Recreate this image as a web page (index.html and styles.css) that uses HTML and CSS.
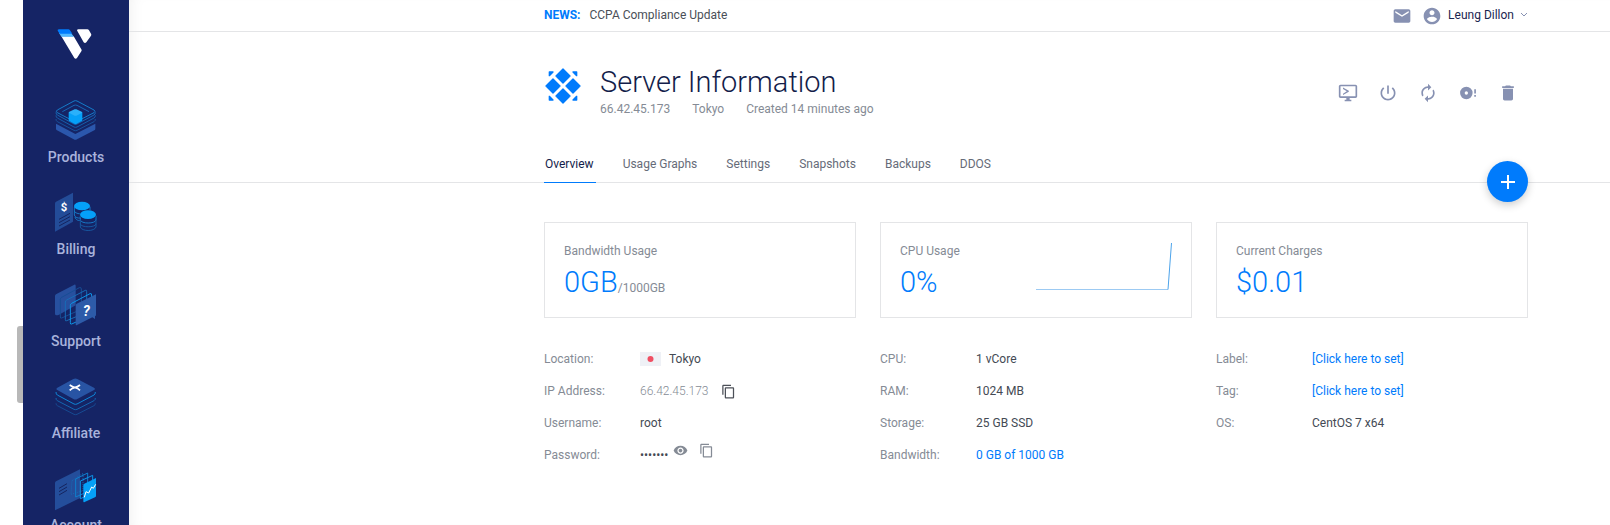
FILE: index.html
```html
<!DOCTYPE html>
<html lang="en">
<head>
<meta charset="utf-8">
<title>Server Information</title>
<meta name="viewport" content="width=device-width, initial-scale=1">
<link rel="stylesheet" href="styles.css">
</head>
<body>
<div class="gutter"><div class="gutter-thumb"></div></div>
<aside class="sidebar">
  <a class="logo" href="#" aria-label="Home">
    <svg width="36" height="30" viewBox="0 0 108 90">
      <path fill="#fff" d="M13 22H50L73 61Q75 64 73 67L60 87Q56 91 52 87Z"/>
      <path fill="#51b9ff" d="M6 12H42L51 23H13Z"/>
      <path fill="#007bfc" d="M3 7Q0 1 6 1H34Q37 1 39 4L46 14H8Z"/>
      <path fill="#fff" d="M61 6Q58 1 64 1H91Q94 1 96 4L102 14Q104 17 102 20L88 40Q84 44 80 40Z"/>
    </svg>
  </a>
  <nav class="side-nav">
    <a class="side-item" href="#">
      <svg class="side-icon" viewBox="0 0 126 126">
        <path fill="#2b57ac" d="M3 74L61 105L121 74V89Q121 92 118 94L66 121Q61 124 56 121L6 94Q3 92 3 89Z"/>
        <g fill="none" stroke-width="3">
          <path stroke="#17509a" d="M3 60Q3 66 7 68L57 94Q61 96 66 94L117 68Q121 66 121 60"/>
          <path stroke="#165da9" d="M3 49Q3 55 7 57L57 84Q61 86 66 84L117 57Q121 55 121 49"/>
          <path stroke="#1765b4" d="M3 40Q3 46 7 48L57 75Q61 77 66 75L117 48Q121 46 121 40M22 38L57 19Q61 17 66 19L102 38"/>
          <path stroke="#147bc9" d="M7 33L57 6Q61 4 66 6L117 33Q123 37 117 41L66 67Q61 69 57 67L7 41Q1 37 7 33Z"/>
        </g>
        <path fill="#05a0f8" d="M41 40L61 48L82 40V64Q82 66 79 67L64 75Q61 76 59 75L44 67Q41 66 41 64Z"/>
        <path fill="#2bb1fa" d="M43 38L59 31Q61 30 64 31L80 38Q83 40 80 42L64 50Q61 51 59 50L43 42Q40 40 43 38Z"/>
      </svg>
      <span>Products</span>
    </a>
    <a class="side-item" href="#">
      <svg class="side-icon" viewBox="0 -4 126 126">
        <path fill="#234c98" d="M0 33Q0 30 3 28L54 1V88L0 118Z"/>
        <g stroke="#15245f" stroke-width="3"><path d="M12 81L45 63M12 91L45 73M12 101L45 83"/></g>
        <text class="icon-text" x="17" y="56">$</text>
        <g fill="none" stroke="#1577c6" stroke-width="3">
          <path d="M58 43V56C60 68 103 68 105 56V43M58 55V68C60 76 70 78 76 77M60 74C63 84 70 85 76 84"/>
          <path d="M76 70V83C78 95 121 95 123 83V70"/>
          <path stroke="#17569f" d="M76 81V95C78 106 121 106 123 95V81M76 94V104C80 118 119 118 123 104V94"/>
        </g>
        <ellipse cx="81" cy="41" rx="24" ry="13" fill="#05a0f8"/>
        <ellipse cx="99" cy="68" rx="25" ry="15" fill="#15245f"/>
        <ellipse cx="99" cy="67" rx="24" ry="13" fill="#05a0f8"/>
      </svg>
      <span>Billing</span>
    </a>
    <a class="side-item" href="#">
      <svg class="side-icon" viewBox="0 -4 126 126">
        <path fill="#27509f" d="M0 35Q0 32 3 30L58 1Q62 0 62 4V63L12 91Q0 96 0 88Z"/>
        <g fill="none" stroke-width="3">
          <path stroke="#174d95" d="M16 45Q16 41 20 39L73 10Q79 8 79 14V75L20 101Q16 103 16 98Z"/>
          <path stroke="#186cb7" d="M31 53Q31 49 35 47L91 18Q95 16 95 22V84L35 109Q31 111 31 106Z"/>
          <path stroke="#0c95e8" d="M46 63Q46 59 50 57L105 28Q110 26 110 32V92L50 119Q46 121 46 115Z"/>
        </g>
        <path fill="#2d5ba9" d="M62 63Q62 60 65 58L123 30V91Q123 94 120 96V104L112 99L66 122Q62 124 62 120Z"/>
        <text class="icon-text icon-text-slant" x="84" y="94">?</text>
      </svg>
      <span>Support</span>
    </a>
    <a class="side-item" href="#">
      <svg class="side-icon" viewBox="0 -7 126 126">
        <g fill="none" stroke-width="3">
          <path stroke="#154a92" d="M3 78Q3 83 7 85L57 111Q61 113 66 111L117 85Q121 83 121 78"/>
          <path stroke="#1464b0" d="M3 62Q3 68 7 70L57 96Q61 98 66 96L117 70Q121 68 121 62"/>
          <path stroke="#0e86d8" d="M3 44Q3 51 7 53L57 80Q61 82 66 80L117 53Q121 51 121 44"/>
        </g>
        <path fill="#2854a4" d="M7 31L55 5Q61 2 67 5L117 31Q123 35 117 38L67 65Q61 68 55 65L7 38Q1 35 7 31Z"/>
        <path fill="none" stroke="#fff" stroke-width="5" d="M44 23Q55 30 61 31Q68 32 75 39M75 23Q68 29 59 31Q51 32 44 39"/>
      </svg>
      <span>Affiliate</span>
    </a>
    <a class="side-item" href="#">
      <svg class="side-icon" viewBox="0 -7 126 126">
        <path fill="#244e9b" d="M0 41Q0 38 3 36L75 0V86L0 123Z"/>
        <path stroke="#15245f" stroke-width="3" d="M12 57L36 43M12 67L36 53M12 77L36 63"/>
        <g fill="none" stroke-width="3">
          <path stroke="#176ab4" stroke-dasharray="3 3" d="M51 34L84 12V64L48 75Z"/>
          <path stroke="#0f7fce" d="M62 29L98 11V67L62 83Z"/>
          <path stroke="#0c95e8" d="M76 35L113 18V73L76 88Z"/>
        </g>
        <path fill="#05a0f8" d="M85 48Q85 45 88 43L123 26V79Q123 82 120 84L89 98Q85 100 85 96Z"/>
        <path fill="none" stroke="#fff" stroke-width="3" d="M88 84L93 67L101 71L110 53L115 57L122 45"/>
      </svg>
      <span>Account</span>
    </a>
  </nav>
</aside>

<div class="main">
  <header class="topbar">
    <div class="container topbar-row">
      <p class="news"><strong>NEWS:</strong><a href="#">CCPA Compliance Update</a></p>
      <div class="user-area">
        <button class="icon-btn" type="button" aria-label="Messages">
          <svg class="icon" viewBox="0 0 24 24"><path d="M20 4H4c-1.1 0-1.99.9-1.99 2L2 18c0 1.1.9 2 2 2h16c1.100 0 2-.9 2-2V6c0-1.1-.9-2-2-2zm0 4l-8 5-8-5V6l8 5 8-5v2z"/></svg>
        </button>
        <button class="user-btn" type="button">
          <svg class="icon" viewBox="0 0 24 24"><path d="M12 2C6.480 2 2 6.480 2 12s4.480 10 10 10 10-4.480 10-10S17.520 2 12 2zm0 3c1.660 0 3 1.340 3 3s-1.340 3-3 3-3-1.340-3-3 1.340-3 3-3zm0 14.200c-2.500 0-4.710-1.280-6-3.220.030-1.990 4-3.080 6-3.080 1.990 0 5.970 1.090 6 3.080-1.290 1.940-3.500 3.220-6 3.220z"/></svg>
          <span>Leung Dillon</span>
          <svg class="chevron" viewBox="0 0 8 6"><path d="M1 1L4 4L7 1"/></svg>
        </button>
      </div>
    </div>
  </header>

  <section class="hero">
    <div class="container">
      <div class="title-row">
        <svg class="os-icon" viewBox="0 0 108 108" aria-hidden="true">
          <g fill="#007bfc" stroke="#007bfc" stroke-width="4" stroke-linejoin="round">
            <path d="M54 3L75 24L54 45L33 24ZM24 33L45 54L24 75L3 54ZM84 33L105 54L84 75L63 54ZM54 63L75 84L54 105L33 84Z"/>
            <path d="M13 12H24L13 23ZM95 12H84L95 23ZM13 96H24L13 85ZM95 96H84L95 85Z"/>
          </g>
        </svg>
        <div class="title-text">
          <h1>Server Information</h1>
          <p class="meta"><span>66.42.45.173</span><span>Tokyo</span><span>Created 14 minutes ago</span></p>
        </div>
        <div class="actions">
          <button class="action" type="button" aria-label="View console"><svg class="icon" viewBox="0 0 24 24"><path d="M21 2H3C1.900 2 1 2.900 1 4v12c0 1.100.9 2 2 2h7v2H8v2h8v-2h-2v-2h7c1.100 0 2-.9 2-2V4c0-1.100-.9-2-2-2zm0 14H3V4h18v12zM6 5.500v1.700L10.500 10 6 12.800v1.700l7-3.900V9.400z"/></svg></button>
          <button class="action" type="button" aria-label="Power"><svg class="icon" viewBox="0 0 24 24"><path d="M13 3h-2v10h2V3zm4.830 2.170l-1.420 1.420C17.990 7.860 19 9.810 19 12c0 3.870-3.130 7-7 7s-7-3.130-7-7c0-2.190 1.010-4.140 2.580-5.420L6.170 5.170C4.230 6.820 3 9.260 3 12c0 4.970 4.030 9 9 9s9-4.030 9-9c0-2.740-1.230-5.180-3.170-6.830z"/></svg></button>
          <button class="action" type="button" aria-label="Restart"><svg class="icon" viewBox="0 0 24 24"><path d="M12 6v3l4-4-4-4v3c-4.420 0-8 3.580-8 8 0 1.570.46 3.030 1.240 4.260L6.700 14.800c-.45-.83-.7-1.790-.7-2.800 0-3.310 2.690-6 6-6zm6.760 1.740L17.300 9.200c.44.840.7 1.790.7 2.800 0 3.310-2.690 6-6 6v-3l-4 4 4 4v-3c4.420 0 8-3.580 8-8 0-1.570-.46-3.030-1.240-4.260z"/></svg></button>
          <button class="action" type="button" aria-label="Reinstall"><svg class="icon" viewBox="0 0 24 24"><path fill-rule="evenodd" d="M10 4.500a7.500 7.500 0 1 0 0 15a7.500 7.500 0 1 0 0-15zM10 10a2 2 0 1 1 0 4a2 2 0 1 1 0-4zM19.500 7.500h2v5h-2zM19.500 14.500h2v2h-2z"/></svg></button>
          <button class="action" type="button" aria-label="Destroy server"><svg class="icon" viewBox="0 0 24 24"><path d="M6 19c0 1.100.9 2 2 2h8c1.100 0 2-.9 2-2V7H6v12zM19 4h-3.500l-1-1h-5l-1 1H5v2h14V4z"/></svg></button>
        </div>
      </div>
      <div class="tabs-row">
        <nav class="tabs">
          <a class="tab tab-active" href="#">Overview</a>
          <a class="tab" href="#">Usage Graphs</a>
          <a class="tab" href="#">Settings</a>
          <a class="tab" href="#">Snapshots</a>
          <a class="tab" href="#">Backups</a>
          <a class="tab" href="#">DDOS</a>
        </nav>
        <button class="fab" type="button" aria-label="Deploy new server"><svg viewBox="0 0 14 14" width="14" height="14"><path d="M7 0V14M0 7H14"/></svg></button>
      </div>
    </div>
  </section>

  <main class="container overview">
    <div class="columns">
      <section class="card">
        <h2>Bandwidth Usage</h2>
        <p class="value">0GB<small>/1000GB</small></p>
      </section>
      <section class="card card-chart">
        <div>
          <h2>CPU Usage</h2>
          <p class="value">0%</p>
        </div>
        <svg class="spark" viewBox="0 0 136 48" role="img" aria-label="CPU usage history"><path fill="none" stroke="#9ccaf3" d="M0 46.500H132"/><path fill="none" stroke="#4ca3ea" d="M132 46.500L135.500 0"/></svg>
      </section>
      <section class="card">
        <h2>Current Charges</h2>
        <p class="value">$0.01</p>
      </section>
    </div>

    <div class="columns details">
      <dl>
        <dt>Location:</dt>
        <dd><svg class="flag" viewBox="0 0 21 14"><rect width="21" height="14" fill="#eff1f6"/><circle cx="10.500" cy="7" r="3" fill="#f04f63"/></svg>Tokyo</dd>
        <dt>IP Address:</dt>
        <dd class="ip">66.42.45.173<button class="copy copy-dark" type="button" aria-label="Copy IP address"><svg viewBox="0 0 24 24"><path d="M16 1H4c-1.100 0-2 .9-2 2v14h2V3h12V1zm3 4H8c-1.100 0-2 .9-2 2v14c0 1.100.9 2 2 2h11c1.100 0 2-.9 2-2V7c0-1.100-.9-2-2-2zm0 16H8V7h11v14z"/></svg></button></dd>
        <dt>Username:</dt>
        <dd>root</dd>
        <dt>Password:</dt>
        <dd class="password"><span>•••••••</span><button class="eye" type="button" aria-label="Show password"><svg viewBox="0 0 24 24"><path d="M12 4.500C7 4.500 2.730 7.610 1 12c1.730 4.390 6 7.500 11 7.500s9.270-3.110 11-7.500c-1.730-4.390-6-7.500-11-7.500zM12 17c-2.760 0-5-2.240-5-5s2.240-5 5-5 5 2.240 5 5-2.240 5-5 5zm0-8c-1.660 0-3 1.340-3 3s1.340 3 3 3 3-1.340 3-3-1.340-3-3-3z"/></svg></button><button class="copy" type="button" aria-label="Copy password"><svg viewBox="0 0 24 24"><path d="M16 1H4c-1.100 0-2 .9-2 2v14h2V3h12V1zm3 4H8c-1.100 0-2 .9-2 2v14c0 1.100.9 2 2 2h11c1.100 0 2-.9 2-2V7c0-1.100-.9-2-2-2zm0 16H8V7h11v14z"/></svg></button></dd>
      </dl>
      <dl>
        <dt>CPU:</dt><dd>1 vCore</dd>
        <dt>RAM:</dt><dd>1024 MB</dd>
        <dt>Storage:</dt><dd>25 GB SSD</dd>
        <dt>Bandwidth:</dt><dd><a href="#">0 GB of 1000 GB</a></dd>
      </dl>
      <dl>
        <dt>Label:</dt><dd><a href="#">[Click here to set]</a></dd>
        <dt>Tag:</dt><dd><a href="#">[Click here to set]</a></dd>
        <dt>OS:</dt><dd>CentOS 7 x64</dd>
      </dl>
    </div>
  </main>
</div>
</body>
</html>
```
FILE: styles.css
```css
* { box-sizing: border-box; }
body {
  margin: 0;
  display: flex;
  min-height: 100vh;
  background: #fff;
  color: #444a54;
  font: 12px/16px Roboto, "Liberation Sans", sans-serif;
}
h1, h2, p, dl, dd { margin: 0; }
a { color: #007bfc; text-decoration: none; }
button {
  display: flex;
  align-items: center;
  justify-content: center;
  padding: 0;
  border: 0;
  background: none;
  color: inherit;
  font: inherit;
  cursor: pointer;
}
svg { display: block; flex: none; }

.gutter { flex: none; width: 23px; padding-top: 326px; }
.gutter-thumb {
  width: 6px;
  height: 77px;
  margin-left: auto;
  border-radius: 3px 0 0 3px;
  background: #b8b8b8;
}

.sidebar {
  flex: none;
  width: 106px;
  height: 100vh;
  overflow: hidden;
  background: #152465;
}
.logo { display: flex; justify-content: center; padding: 29px 2px 40px 0; }
.side-nav { display: flex; flex-direction: column; gap: 12px; }
.side-item {
  display: flex;
  flex-direction: column;
  align-items: center;
  gap: 6px;
  height: 80px;
  color: #a9b3dc;
  font-size: 14px;
  font-weight: 500;
  line-height: 20px;
}
.side-icon { width: 42px; height: 42px; overflow: visible; }
.icon-text { fill: #fff; font-size: 34px; font-weight: 700; }
.icon-text-slant { font-size: 42px; font-style: italic; }

.main {
  flex: 1;
  min-width: 0;
  box-shadow: inset 12px 0 16px -12px rgba(0, 0, 0, .08);
}
.container { max-width: 984px; margin: 0 82px 0 auto; }

.topbar { border-bottom: 1px solid #e4e5e7; }
.topbar-row { display: flex; justify-content: space-between; align-items: center; height: 31px; padding-bottom: 2px; }
.news { display: flex; gap: 9px; }
.news strong { color: #007bfc; font-weight: 700; }
.news a { color: #4a4f57; }
.user-area { display: flex; gap: 10px; }
.icon { width: 20px; height: 20px; fill: #8791b2; }
.user-area .icon { margin-top: 2px; }
.user-btn { gap: 6px; color: #1b2550; }
.chevron { width: 8px; height: 6px; fill: none; stroke: #8791b2; }

.hero { border-bottom: 1px solid #e4e5e7; }
.title-row { display: flex; padding-top: 32px; }
.os-icon { width: 36px; height: 36px; margin: 4px 19px 0 1px; }
.title-text { flex: 1; }
h1 { color: #131d4a; font-size: 29px; font-weight: 300; line-height: 37px; }
.meta { display: flex; gap: 22px; color: #858b95; }
.actions { display: flex; align-items: center; margin-top: 6px; height: 46px; }
.action { width: 40px; height: 40px; }

.tabs-row { display: flex; justify-content: space-between; margin-top: 29px; height: 36px; }
.tabs { display: flex; gap: 26px; }
.tab {
  height: 37px;
  padding: 9px 2px 0 1px;
  border-bottom: 1px solid transparent;
  color: #666b78;
  line-height: 18px;
}
.tab-active { border-color: #007bfc; color: #131d4a; }
.fab {
  width: 41px;
  height: 41px;
  margin-top: 15px;
  border-radius: 50%;
  background: #007bfc;
  box-shadow: 0 3px 8px rgba(0, 0, 0, .2);
}
.fab path { stroke: #fff; stroke-width: 2; }

.overview { padding-top: 39px; }
.columns { display: grid; grid-template-columns: repeat(3, 1fr); gap: 24px; }
.card { padding: 20px 19px 16px; border: 1px solid #e4e5e7; }
.card h2 { color: #858b95; font-size: 12px; font-weight: 400; line-height: 16px; }
.card-chart { display: flex; justify-content: space-between; }
.value { color: #007bfc; font-size: 29px; font-weight: 300; line-height: 38px; margin-top: 4px; }
.value small { color: #858b95; font-size: 12px; font-weight: 400; line-height: 1; }
.spark { width: 136px; height: 48px; }

.details { padding-top: 25px; }
dl { display: grid; grid-template-columns: 96px 1fr; grid-auto-rows: 32px; align-content: start; align-items: center; }
dt { color: #858b95; }
dd { display: flex; align-items: center; }
.flag { width: 21px; height: 14px; margin-right: 8px; }
.ip { color: #858b95; font-weight: 300; }
.copy svg { width: 15px; height: 15px; fill: #858b95; }
.copy { margin-left: 11px; }
.ip .copy { margin-left: 12px; }
.copy-dark svg { fill: #4c5058; }
.eye { margin-left: 5px; }
.eye svg { width: 15px; height: 15px; fill: #858b95; }
.password button { margin-bottom: 9px; }
```
